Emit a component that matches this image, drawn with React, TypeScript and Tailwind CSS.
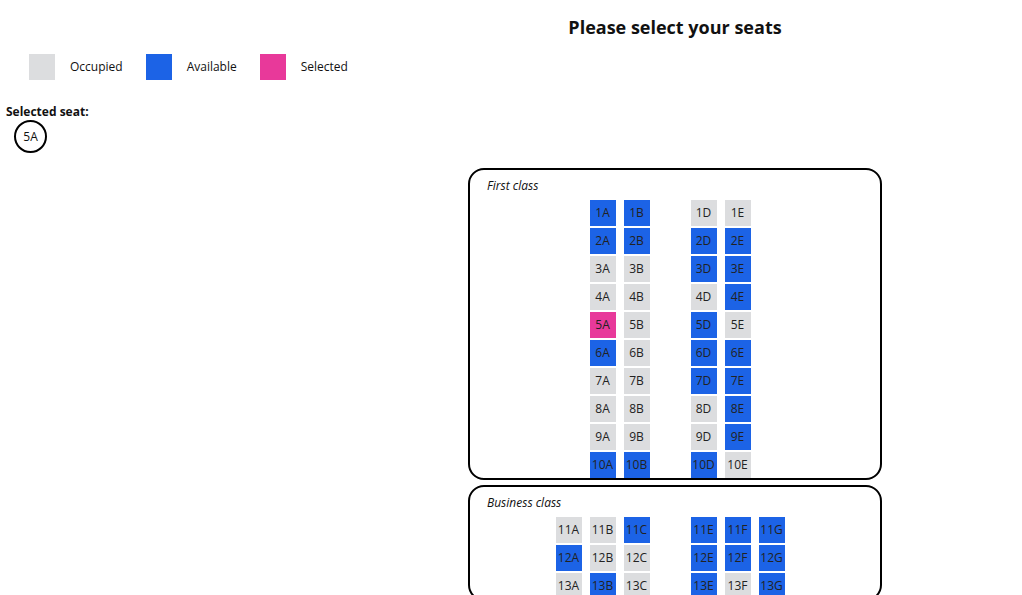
type SeatState = "occupied" | "available" | "selected";

const O: SeatState = "occupied";
const A: SeatState = "available";
const S: SeatState = "selected";

const firstClass: { row: number; left: SeatState[]; right: SeatState[] }[] = [
  { row: 1, left: [A, A], right: [O, O] },
  { row: 2, left: [A, A], right: [A, A] },
  { row: 3, left: [O, O], right: [A, A] },
  { row: 4, left: [O, O], right: [O, A] },
  { row: 5, left: [S, O], right: [A, O] },
  { row: 6, left: [A, O], right: [A, A] },
  { row: 7, left: [O, O], right: [A, A] },
  { row: 8, left: [O, O], right: [O, A] },
  { row: 9, left: [O, O], right: [O, A] },
  { row: 10, left: [A, A], right: [A, O] },
];

const businessClass: { row: number; left: SeatState[]; right: SeatState[] }[] = [
  { row: 11, left: [O, O, A], right: [A, A, A] },
  { row: 12, left: [A, O, O], right: [A, A, A] },
  { row: 13, left: [O, A, O], right: [A, O, A] },
];

const seatColor: Record<SeatState, string> = {
  occupied: "bg-[#dcdddf]",
  available: "bg-[#1c63e6]",
  selected: "bg-[#e8399a]",
};

const Seat = ({ label, state }: { label: string; state: SeatState }) => (
  <div
    className={`w-[26px] h-[26px] flex items-center justify-center text-[12px] text-[#222] ${seatColor[state]}`}
  >
    {label}
  </div>
);

const Cabin = ({
  title,
  rows,
  leftLetters,
  rightLetters,
}: {
  title: string;
  rows: { row: number; left: SeatState[]; right: SeatState[] }[];
  leftLetters: string[];
  rightLetters: string[];
}) => (
  <div className="w-[414px] border-2 border-black rounded-[16px] pt-[8px] overflow-hidden">
    <p className="italic text-[12px] leading-[16px] pl-[17px]">{title}</p>
    <div className="flex flex-col gap-[2px] items-center mt-[6px] pr-[10px]">
      {rows.map((r) => (
        <div key={r.row} className="flex gap-[41px]">
          <div className="flex gap-[8px]">
            {r.left.map((s, i) => (
              <Seat key={i} label={`${r.row}${leftLetters[i]}`} state={s} />
            ))}
          </div>
          <div className="flex gap-[8px]">
            {r.right.map((s, i) => (
              <Seat key={i} label={`${r.row}${rightLetters[i]}`} state={s} />
            ))}
          </div>
        </div>
      ))}
    </div>
  </div>
);

const LegendItem = ({ color, label }: { color: string; label: string }) => (
  <div className="flex items-center mr-[23px]">
    <div className={`w-[26px] h-[26px] ${color}`} />
    <span className="ml-[15px] text-[12px]">{label}</span>
  </div>
);

export default function App() {
  return (
    <div
      className="min-h-screen bg-white text-[#111] pb-10"
      style={{ fontFamily: '"Open Sans", "Noto Sans", sans-serif' }}
    >
      <h1 className="ml-[468px] w-[414px] text-center text-[18px] font-bold leading-[24px] pt-[15px]">
        Please select your seats
      </h1>
      <div className="flex items-center pl-[29px] mt-[15px]">
        <LegendItem color="bg-[#dcdddf]" label="Occupied" />
        <LegendItem color="bg-[#1c63e6]" label="Available" />
        <LegendItem color="bg-[#e8399a]" label="Selected" />
      </div>
      <div className="pl-[6px] mt-[24px]">
        <p className="text-[12px] font-bold leading-[16px]">Selected seat:</p>
        <div className="ml-[8px] w-[33px] h-[33px] rounded-full border-2 border-black flex items-center justify-center text-[12px]">
          5A
        </div>
      </div>
      <div className="ml-[468px] mt-[15px] flex flex-col gap-[5px]">
        <Cabin
          title="First class"
          rows={firstClass}
          leftLetters={["A", "B"]}
          rightLetters={["D", "E"]}
        />
        <Cabin
          title="Business class"
          rows={businessClass}
          leftLetters={["A", "B", "C"]}
          rightLetters={["E", "F", "G"]}
        />
      </div>
    </div>
  );
}
